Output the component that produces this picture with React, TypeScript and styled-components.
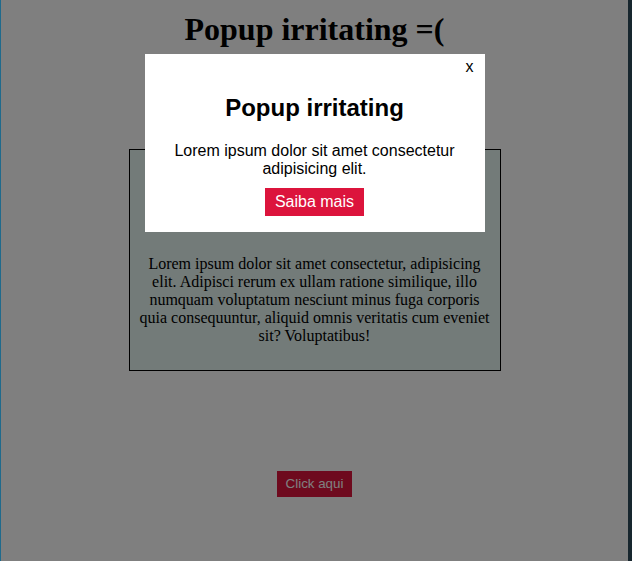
import styled, { createGlobalStyle } from 'styled-components';

const GlobalStyle = createGlobalStyle`
  html, body {
    margin: 0;
    background: #ffffff;
  }
  body {
    font-family: 'Liberation Serif', 'Times New Roman', serif;
  }
`;

const App = () => {
  return (
    <>
      <GlobalStyle />
      <PageContainer>
        <PageTitle>Popup irritating =(</PageTitle>
        <ContentBox>
          <ContentTitle>Popup irritating</ContentTitle>
          <ContentText>
            Lorem ipsum dolor sit amet consectetur, adipisicing elit. Adipisci
            rerum ex ullam ratione similique, illo numquam voluptatum nesciunt
            minus fuga corporis quia consequuntur, aliquid omnis veritatis cum
            eveniet sit? Voluptatibus!
          </ContentText>
        </ContentBox>
        <OpenButton>Click aqui</OpenButton>
      </PageContainer>

      {/* popup aberto por cima da página */}
      <Overlay>
        <PopupBox>
          <CloseButton>x</CloseButton>
          <PopupTitle>Popup irritating</PopupTitle>
          <PopupText>Lorem ipsum dolor sit amet consectetur adipisicing elit.</PopupText>
          <SaibaButton>Saiba mais</SaibaButton>
        </PopupBox>
      </Overlay>
    </>
  );
};

export default App;

const PageContainer = styled.div`
  display: flex;
  flex-direction: column;
  align-items: center;
  box-sizing: border-box;
  min-height: 561px;
  padding-top: 11px;
  border-left: 1px solid #1f6a8c;
  border-right: 4px solid #17262e;
`;

const PageTitle = styled.h1`
  margin: 0;
  font-size: 32px;
  font-weight: bold;
  color: #000;
`;

const ContentBox = styled.div`
  width: 350px;
  margin-top: 101px;
  padding: 54px 10px 25px;
  border: 1px solid #000;
  background-color: #e6f6f3;
  text-align: center;
`;

const ContentTitle = styled.h2`
  margin: 0 0 24px;
  font-size: 24px;
`;

const ContentText = styled.p`
  margin: 0;
  font-size: 16px;
`;

const OpenButton = styled.button`
  margin-top: 100px;
  padding: 5px 9px;
  font-family: 'Liberation Sans', Arial, sans-serif;
  font-size: 13.33px;
  line-height: 16px;
  color: #fff;
  background-color: #dc143c;
  border: none;
  cursor: pointer;
`;

const Overlay = styled.div`
  position: fixed;
  top: 0;
  bottom: 0;
  left: 1px;
  right: 4px;
  display: flex;
  justify-content: center;
  align-items: flex-start;
  padding-top: 54px;
  background-color: rgba(0, 0, 0, 0.5);
`;

const PopupBox = styled.div`
  position: relative;
  box-sizing: border-box;
  width: 340px;
  padding: 20px 20px 16px;
  background-color: #fff;
  text-align: center;
  font-family: 'Liberation Sans', Arial, sans-serif;
`;

const CloseButton = styled.span`
  position: absolute;
  top: 4px;
  right: 11px;
  font-size: 16px;
  color: #000;
  cursor: pointer;
`;

const PopupTitle = styled.h2`
  margin: 20px 0;
  font-size: 24px;
  font-weight: bold;
`;

const PopupText = styled.p`
  margin: 0 0 10px;
  font-size: 16px;
`;

const SaibaButton = styled.button`
  padding: 5px 10px;
  font-family: 'Liberation Sans', Arial, sans-serif;
  font-size: 16px;
  color: #fff;
  background-color: #dc143c;
  border: none;
  cursor: pointer;
`;
